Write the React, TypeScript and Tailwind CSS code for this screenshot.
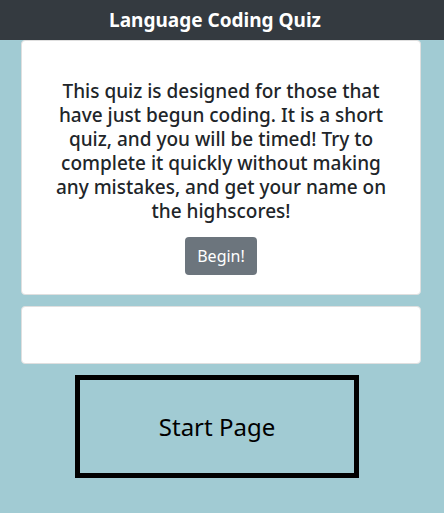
export default function App() {
  return (
    <div className="min-h-[513px] bg-[#a1cbd3] font-['Noto_Sans',sans-serif]">
      <header className="h-10 bg-[#343a40] flex items-center justify-center pr-[14px]">
        <h1 className="text-white text-[19px] font-bold">Language Coding Quiz</h1>
      </header>
      <main className="flex flex-col items-center pr-[2px]">
        <div className="w-[400px] bg-white rounded border border-[#dfdfdf] px-5 pt-[38px] pb-[19px] flex flex-col items-center">
          <p className="w-[340px] text-center text-[19px] leading-[24px] font-medium text-[#212529]">
            This quiz is designed for those that have just begun coding. It is a short quiz, and you will be timed! Try to complete it quickly without making any mistakes, and get your name on the highscores!
          </p>
          <button className="mt-[14px] h-[38px] px-3 rounded bg-[#6c757d] text-white text-[16px]">Begin!</button>
        </div>
        <div className="mt-[11px] w-[400px] h-[58px] bg-white rounded border border-[#dfdfdf]" />
        <div className="mt-[11px] self-start ml-[75px] w-[284px] h-[103px] border-[5px] border-black flex items-center justify-center">
          <span className="text-[24px] text-black">Start Page</span>
        </div>
      </main>
    </div>
  );
}
